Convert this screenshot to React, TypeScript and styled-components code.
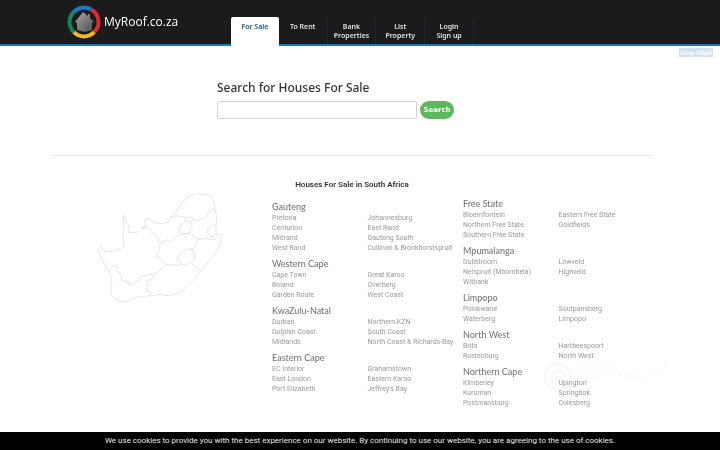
import React from "react";
import styled, { createGlobalStyle } from "styled-components";

const Global = createGlobalStyle`
  * { box-sizing: border-box; }
  body { margin: 0; background: #fff; color: #333; font-family: Roboto, sans-serif; }
  a { color: inherit; text-decoration: none; }
  h1, h2, h3, ul { margin: 0; padding: 0; list-style: none; }
`;
const Page = styled.div`
  min-height: 100vh;
  display: flex;
  flex-direction: column;
`;
const Header = styled.header`
  background: #1b1b1b;
  border-bottom: 2px solid #1878bd;
  padding-right: 16px;
`;
const Container = styled.div`
  width: 100%;
  max-width: 600px;
  margin: 0 auto;
`;
const HeaderRow = styled(Container)`
  height: 44px;
  display: flex;
  padding-left: 14px;
`;
const Logo = styled.a`
  width: 165px;
  display: flex;
  align-items: center;
  gap: 3px;
  padding-left: 1px;
  color: #fff;
  font: 12px/20px "Open Sans", sans-serif;
  white-space: nowrap;
  svg { flex: none; }
`;
const Nav = styled.nav`
  display: flex;
  align-self: flex-end;
  width: 243px;
  height: 27px;
`;
const Tab = styled.a<{ $active?: boolean }>`
  flex: 1;
  padding-top: 5px;
  text-align: center;
  font: 600 7px/9px "Noto Sans", sans-serif;
  white-space: pre-line;
  color: ${p => (p.$active ? "#17557f" : "#e2e2e2")};
  background: ${p => (p.$active ? "#fff" : "transparent")};
  border-radius: ${p => (p.$active ? "2px 2px 0 0" : "0")};
  border-right: ${p => (p.$active ? "0" : "1px solid #14293a")};
  margin-bottom: ${p => (p.$active ? "-2px" : "0")};
`;
const Main = styled.main`
  flex: 1;
  padding: 0 16px 50px 0;
`;
const Search = styled.form`
  padding: 32px 0 36px 165px;
  border-bottom: 1px solid #e6e6e6;
`;
const Title = styled.h1`
  font: 500 12px/20px "Noto Sans", sans-serif;
  margin-bottom: 3px;
`;
const SearchRow = styled.div`
  display: flex;
  gap: 3px;
`;
const Field = styled.input`
  width: 200px;
  height: 18px;
  border: 1px solid #d2d2d2;
  border-radius: 2px;
  background: #fff;
  padding: 0 4px;
  font-size: 8px;
`;
const Button = styled.button`
  width: 34px;
  height: 18px;
  padding: 0;
  border: 0;
  border-radius: 9px;
  background: #5cb85c;
  color: #fff;
  font: bold 7px/18px "DejaVu Sans", sans-serif;
`;
const SubTitle = styled.h2`
  margin-top: 23px;
  text-align: center;
  font: 600 8px/12px Roboto, sans-serif;
`;
const Directory = styled.div`
  display: grid;
  grid-template-columns: 220px 1fr 1fr;
  margin-right: -2px;
`;
const MapBox = styled.div`
  padding: 2px 0 0 44px;
  svg { display: block; }
`;
const Column = styled.div<{ $low?: boolean }>`
  display: flex;
  flex-direction: column;
  gap: 5px;
  padding-top: ${p => (p.$low ? "10px" : "7px")};
`;
const Province = styled.h3`
  font: 500 9px/12px Lato, sans-serif;
  color: #777;
`;
const Towns = styled.div`
  display: grid;
  grid-template-columns: 1fr 1fr;
`;
const TownList = styled.ul`
  font-size: 7px;
  line-height: 10px;
  color: #999;
  white-space: nowrap;
`;
const LiveChat = styled.a`
  position: fixed;
  top: 48px;
  right: 7px;
  width: 34px;
  height: 9px;
  background: #cfe4ef;
  color: #fff;
  text-align: center;
  font: bold 6px/9px "DejaVu Sans", sans-serif;
`;
const ChatPrompt = styled.aside`
  position: fixed;
  z-index: -1;
  right: 20px;
  bottom: 58px;
  width: 157px;
  display: flex;
  gap: 4px;
  color: #f9f9f9;
  font-size: 8px;
  line-height: 9px;
`;
const ChatText = styled.div`
  white-space: nowrap;
`;
const Close = styled.button`
  position: absolute;
  right: 32px;
  top: 0;
  border: 0;
  padding: 0;
  background: none;
  color: #f6f6f6;
  font: 10px/8px Roboto, sans-serif;
`;
const Cookies = styled.footer`
  position: fixed;
  inset: auto 0 0 0;
  background: #000;
  color: #e8e8e8;
  text-align: center;
  font: 8px/18px Roboto, sans-serif;
  white-space: nowrap;
`;

type Region = [string, string[], string[]];
const left: Region[] = [
  ["Gauteng", ["Pretoria", "Centurion", "Midrand", "West Rand"], ["Johannesburg", "East Rand", "Gauteng South", "Cullinan & Bronkhorstspruit"]],
  ["Western Cape", ["Cape Town", "Boland", "Garden Route"], ["Great Karoo", "Overberg", "West Coast"]],
  ["KwaZulu-Natal", ["Durban", "Dolphin Coast", "Midlands"], ["Northern KZN", "South Coast", "North Coast & Richards Bay"]],
  ["Eastern Cape", ["EC Interior", "East London", "Port Elizabeth"], ["Grahamstown", "Eastern Karoo", "Jeffrey's Bay"]],
];
const right: Region[] = [
  ["Free State", ["Bloemfontein", "Northern Free State", "Southern Free State"], ["Eastern Free State", "Goldfields"]],
  ["Mpumalanga", ["Dullstroom", "Nelspruit (Mbombela)", "Witbank"], ["Lowveld", "Highveld"]],
  ["Limpopo", ["Polokwane", "Waterberg"], ["Soutpansberg", "Limpopo"]],
  ["North West", ["Brits", "Rustenburg"], ["Hartbeespoort", "North West"]],
  ["Northern Cape", ["Kimberley", "Kuruman", "Postmansburg"], ["Upington", "Springbok", "Colesberg"]],
];

const Regions = ({ items, low }: { items: Region[]; low?: boolean }) => (
  <Column $low={low}>
    {items.map(([name, ...lists]) => (
      <section key={name}>
        <Province>{name}</Province>
        <Towns>
          {lists.map((list, i) => (
            <TownList key={i}>
              {list.map(t => <li key={t}><a href="#">{t}</a></li>)}
            </TownList>
          ))}
        </Towns>
      </section>
    ))}
  </Column>
);

const LogoMark = () => (
  <svg width="34" height="34" viewBox="0 0 34 34" fill="none" aria-hidden="true">
    <defs>
      <linearGradient id="house" x1="0" y1="0" x2="1" y2="1">
        <stop offset="0" stopColor="#aaa" /><stop offset="1" stopColor="#4c4c4c" />
      </linearGradient>
    </defs>
    <g strokeWidth="4">
      <path d="M6.8 6.8A14.4 14.4 0 0 1 24.2 4.5" stroke="#1b79c4" />
      <path d="M24.2 4.5A14.4 14.4 0 0 1 27.2 27.2" stroke="#e12836" />
      <path d="M27.2 27.2A14.4 14.4 0 0 1 6.8 27.2" stroke="#f6b52c" />
      <path d="M6.8 27.2A14.4 14.4 0 0 1 6.8 6.8" stroke="#14855c" />
    </g>
    <path d="M16 7 21 11V9h2v4l4 4-2 1v7l-7 2-8-2v-7l-2-1Z" fill="url(#house)" />
  </svg>
);

const SouthAfrica = () => (
  <svg width="128" height="114" viewBox="0 0 384 342" fill="none" stroke="#dcdcdc" strokeWidth="2.2" strokeLinejoin="round" role="img" aria-label="Map of South Africa">
    <path d="M27 216 15 192 4 171 14 159 19 164 23 173 52 177 78 164 82 158V68L88 80 92 92 99 99 98 118 115 118 125 117 137 109 148 99 145 87 149 77 163 80 179 90 199 92 207 88 216 90 222 73 233 62 245 52 256 30 276 12 294 4 304 0 315 4 330 3 348 9 355 28 355 48 360 58 362 77 360 97 360 124 378 126 374 147 368 164 357 182 341 201 326 219 314 235 296 258 277 276 256 294 233 306 209 308 187 304 169 308 148 310 124 312 105 321 91 327 75 326 66 327 62 318 46 307 45 287 48 273 44 265 47 255 39 235Z" />
    <path d="M39 235 50 220 60 217 64 235 72 240 77 251 78 264 88 263 90 270 98 265 98 276 110 276 119 266 130 262 136 248 144 250 158 245 173 244 185 237 199 226 208 216 206 208 190 195 180 194 190 171 190 158 196 147 188 145 185 133 176 128 160 110 151 98" />
    <path d="M196 147 208 143 216 140 220 147 228 143 232 134 246 130 250 127 268 122 280 121 299 132 308 140 299 158 290 167 271 169 255 178 245 190 243 199 254 207 255 214 248 218 223 214 208 216" />
    <path d="M254 212 268 217 284 208 296 196 292 180 284 169M284 208 292 218 306 226 314 235M290 167 296 187 296 196M308 140 325 136 341 138 360 139M360 97 350 95 340 102 334 111 335 121 341 130 352 132 360 124" />
    <path d="M222 73 242 68 270 74 266 87 260 94 252 96 252 106 248 117 255 122 281 120 284 106 290 98 283 92 283 83 270 85M270 74 281 72 291 78 286 90M291 78 303 84 318 76 326 77 334 65 345 53 356 50M173 244 176 252 162 261 152 266 156 277 150 285 152 296 163 295 163 306" />
    <path d="M145 99 137 105 145 108 151 98" />
  </svg>
);

export default function App() {
  return (
    <Page>
      <Global />
      <Header>
        <HeaderRow>
          <Logo href="#"><LogoMark />MyRoof.co.za</Logo>
          <Nav>
            <Tab href="#" $active>For Sale</Tab>
            <Tab href="#">To Rent</Tab>
            <Tab href="#">{"Bank\nProperties"}</Tab>
            <Tab href="#">{"List\nProperty"}</Tab>
            <Tab href="#">{"Login\nSign up"}</Tab>
          </Nav>
        </HeaderRow>
      </Header>
      <Main>
        <Container>
          <Search onSubmit={e => e.preventDefault()}>
            <Title>Search for Houses For Sale</Title>
            <SearchRow>
              <Field type="text" aria-label="Search for houses for sale" />
              <Button type="submit">Search</Button>
            </SearchRow>
          </Search>
          <SubTitle>Houses For Sale in South Africa</SubTitle>
          <Directory>
            <MapBox><SouthAfrica /></MapBox>
            <Regions items={left} low />
            <Regions items={right} />
          </Directory>
        </Container>
      </Main>
      <LiveChat href="#">Live Chat</LiveChat>
      <ChatPrompt>
        <svg width="30" height="30" viewBox="0 0 30 30" fill="none" stroke="#f8f8f8" strokeWidth="3" aria-hidden="true">
          <circle cx="15" cy="15" r="13" />
          <path d="M9 21V12l6-4 6 4v9M13 21v-6h4v6" />
        </svg>
        <ChatText>Need help?<br />Our staff are ready to help!</ChatText>
        <Close type="button" aria-label="Close">×</Close>
      </ChatPrompt>
      <Cookies>We use cookies to provide you with the best experience on our website. By continuing to use our website, you are agreeing to the use of cookies.</Cookies>
    </Page>
  );
}
